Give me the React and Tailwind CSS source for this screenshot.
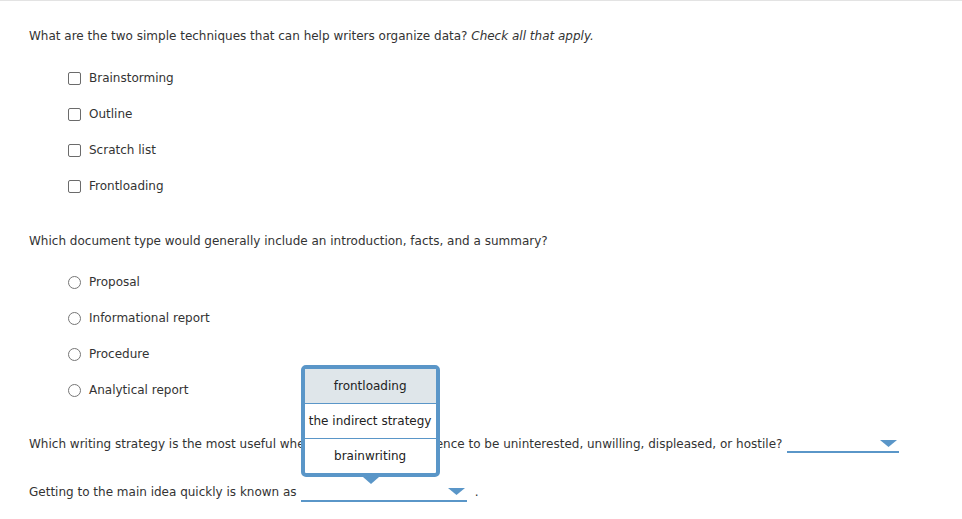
import React from "react";

const BLUE = "#5a96c8";

function Arrow() {
  return (
    <svg width="17" height="7" viewBox="0 0 17 7" className="absolute right-[2px] top-[5px]">
      <polygon points="0,0 17,0 8.5,7" fill={BLUE} />
    </svg>
  );
}

function Checkbox({ label }) {
  return (
    <div className="h-[36px] flex items-center">
      <span className="w-[13px] h-[13px] border border-[#6b6b6b] rounded-[2px] bg-white shrink-0" />
      <span className="ml-[8px]">{label}</span>
    </div>
  );
}

function Radio({ label }) {
  return (
    <div className="h-[36px] flex items-center">
      <span className="w-[13px] h-[13px] border border-[#767676] rounded-full bg-white shrink-0" />
      <span className="ml-[8px]">{label}</span>
    </div>
  );
}

export default function App() {
  return (
    <div
      className="w-[962px] h-[519px] bg-white border-t border-[#e3e3e3] text-[#333] text-[12px] overflow-hidden"
      style={{ fontFamily: '"DejaVu Sans", Verdana, sans-serif' }}
    >
      <div className="pl-[29px] pt-[26px]">
        <div className="h-[18px] leading-[18px]">
          What are the two simple techniques that can help writers organize data? <i>Check all that apply.</i>
        </div>
        <div className="mt-[15px] pl-[39px]">
          <Checkbox label="Brainstorming" />
          <Checkbox label="Outline" />
          <Checkbox label="Scratch list" />
          <Checkbox label="Frontloading" />
        </div>
        <div className="mt-[28px] h-[18px] leading-[18px]">
          Which document type would generally include an introduction, facts, and a summary?
        </div>
        <div className="mt-[14px] pl-[39px]">
          <Radio label="Proposal" />
          <Radio label="Informational report" />
          <Radio label="Procedure" />
          <Radio label="Analytical report" />
        </div>
        <div className="mt-[27px] h-[18px] leading-[18px] flex items-start whitespace-nowrap">
          <span>
            Which writing strategy is the most useful when you expect the audience to be uninterested, unwilling, displeased, or hostile?
          </span>
          <span className="relative inline-block ml-[5px] w-[112px] h-[18px] border-b-2 border-[#5a96c8]">
            <Arrow />
          </span>
        </div>
        <div className="mt-[30px] h-[18px] leading-[18px] flex items-start whitespace-nowrap">
          <span>Getting to the main idea quickly is known as</span>
          <span className="relative inline-block ml-[4px] w-[166px] h-[19px] border-b-2 border-[#5a96c8]">
            <Arrow />
            <div className="absolute left-0 bottom-[calc(100%+6px)] w-[139px] border-4 border-[#5a96c8] rounded-[5px] bg-white text-[#222]">
              <div className="h-[34px] flex items-center justify-center bg-[#dfe6ea]">frontloading</div>
              <div className="h-[35px] flex items-center justify-center border-t border-[#5a96c8]">the indirect strategy</div>
              <div className="h-[35px] flex items-center justify-center border-t border-[#5a96c8]">brainwriting</div>
              <svg width="16" height="7" viewBox="0 0 16 7" className="absolute left-[58px] top-full mt-[4px]">
                <polygon points="0,0 16,0 8,7" fill={BLUE} />
              </svg>
            </div>
          </span>
          <span className="ml-[8px]">.</span>
        </div>
      </div>
    </div>
  );
}
